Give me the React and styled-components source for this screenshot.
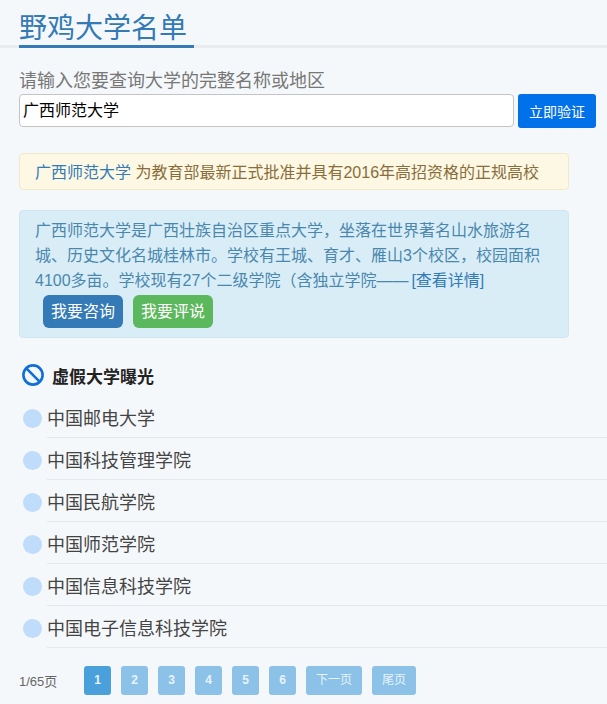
import React from 'react';
import styled, { createGlobalStyle } from 'styled-components';

const GlobalStyle = createGlobalStyle`
	html, body {
		margin: 0;
		padding: 0;
		background: #f5f8fa;
		font-family: 'Liberation Sans', 'Noto Sans CJK SC', sans-serif;
	}
	* {
		box-sizing: border-box;
	}
`;

const schools = [
	'中国邮电大学',
	'中国科技管理学院',
	'中国民航学院',
	'中国师范学院',
	'中国信息科技学院',
	'中国电子信息科技学院',
];

const pages = ['1', '2', '3', '4', '5', '6'];

const App = () => {
	return (
		<Page>
			<GlobalStyle />
			<TitleBar>
				<Title>野鸡大学名单</Title>
			</TitleBar>
			<Content>
				<SearchLabel>请输入您要查询大学的完整名称或地区</SearchLabel>
				<SearchRow>
					<SearchInput defaultValue="广西师范大学" />
					<SearchButton>立即验证</SearchButton>
				</SearchRow>
				<WarningBox>
					<SchoolLink>广西师范大学</SchoolLink> 为教育部最新正式批准并具有2016年高招资格的正规高校
				</WarningBox>
				<InfoBox>
					<InfoText>
						广西师范大学是广西壮族自治区重点大学，坐落在世界著名山水旅游名城、历史文化名城桂林市。学校有王城、育才、雁山3个校区，校园面积4100多亩。学校现有27个二级学院（含独立学院——<DetailLink>[查看详情]</DetailLink>
					</InfoText>
					<ActionRow>
						<ActionButton $bg="#337ab7">我要咨询</ActionButton>
						<ActionButton $bg="#5cb85c">我要评说</ActionButton>
					</ActionRow>
				</InfoBox>
				<SectionHeading>
					<svg width="24" height="24" viewBox="0 0 24 24" fill="none" stroke="#0f6fd6" strokeWidth="2.6">
						<circle cx="12" cy="12" r="9.6" />
						<line x1="5.4" y1="5.4" x2="18.6" y2="18.6" />
					</svg>
					<SectionTitle>虚假大学曝光</SectionTitle>
				</SectionHeading>
			</Content>
			<SchoolList>
				{schools.map((name) => (
					<SchoolRow key={name}>
						<Dot />
						<SchoolName>{name}</SchoolName>
					</SchoolRow>
				))}
			</SchoolList>
			<Pager>
				<PageCount>1/65页</PageCount>
				{pages.map((p) => (
					<PageButton key={p} $active={p === '1'}>
						{p}
					</PageButton>
				))}
				<PageButton $wide>下一页</PageButton>
				<PageButton $wide>尾页</PageButton>
			</Pager>
		</Page>
	);
};

export default App;

const Page = styled.div`
	width: 607px;
	height: 704px;
	overflow: hidden;
	background: #f5f8fa;
`;

const TitleBar = styled.div`
	height: 48px;
	padding-left: 19px;
	border-bottom: 3px solid #e9ecef;
`;

const Title = styled.h1`
	display: inline-block;
	margin: 0;
	height: 48px;
	width: 175px;
	padding-top: 4px;
	font-size: 28px;
	font-weight: 400;
	line-height: 50px;
	color: #337ab7;
	border-bottom: 3px solid #337ab7;
`;

const Content = styled.div`
	padding: 0 0 0 19px;
`;

const SearchLabel = styled.div`
	margin-top: 22px;
	height: 24px;
	font-size: 18px;
	line-height: 22px;
	color: #777;
`;

const SearchRow = styled.div`
	display: flex;
	gap: 4px;
	height: 34px;
`;

const SearchInput = styled.input`
	width: 495px;
	height: 33px;
	padding: 0 4px 3px 3px;
	font-family: inherit;
	font-size: 16px;
	color: #000;
	background: #fff;
	border: 1px solid #c4c4c4;
	border-radius: 4px;
	outline: none;
`;

const SearchButton = styled.button`
	width: 78px;
	height: 34px;
	padding: 0;
	font-family: inherit;
	font-size: 14px;
	color: #fff;
	background: #0071e8;
	border: none;
	border-radius: 3px;
`;

const WarningBox = styled.div`
	width: 550px;
	height: 37px;
	margin-top: 25px;
	padding: 0 15px;
	font-size: 16px;
	line-height: 37px;
	white-space: nowrap;
	color: #8a6d3b;
	background: #fcf8e3;
	border: 1px solid #f3e8c8;
	border-radius: 4px;
`;

const SchoolLink = styled.span`
	color: #337ab7;
`;

const InfoBox = styled.div`
	width: 550px;
	height: 128px;
	margin-top: 20px;
	padding: 7px 15px;
	background: #d9edf7;
	border: 1px solid #cfe6f2;
	border-radius: 4px;
`;

const InfoText = styled.div`
	font-size: 16px;
	line-height: 25px;
	color: #4a87ad;
`;

const DetailLink = styled.span`
	margin-left: 3px;
	color: #337ab7;
`;

const ActionRow = styled.div`
	display: flex;
	gap: 10px;
	margin-top: 2px;
	padding-left: 8px;
`;

const ActionButton = styled.div`
	width: 80px;
	height: 33px;
	font-size: 16px;
	line-height: 33px;
	text-align: center;
	color: #fff;
	background: ${(props) => props.$bg};
	border-radius: 6px;
`;

const SectionHeading = styled.div`
	display: flex;
	align-items: center;
	gap: 7px;
	height: 26px;
	margin-top: 24px;
	padding-left: 2px;
`;

const SectionTitle = styled.div`
	padding-top: 1px;
	font-size: 17px;
	font-weight: 700;
	color: #222;
`;

const SchoolList = styled.div`
	margin-top: 8px;
	padding-left: 23px;
`;

const SchoolRow = styled.div`
	display: flex;
	align-items: center;
	height: 42px;
`;

const Dot = styled.div`
	flex: none;
	width: 19px;
	height: 19px;
	margin-top: 2px;
	margin-right: 5px;
	border-radius: 50%;
	background: #bfdcfb;
`;

const SchoolName = styled.div`
	flex: 1;
	height: 42px;
	padding-top: 4px;
	font-size: 18px;
	line-height: 39px;
	color: #444;
	border-bottom: 1px solid #e4e8eb;
`;

const Pager = styled.div`
	display: flex;
	align-items: center;
	gap: 10px;
	margin-top: 18px;
	padding-left: 19px;
`;

const PageCount = styled.div`
	width: 55px;
	font-size: 13px;
	color: #666;
`;

const PageButton = styled.div`
	height: 29px;
	width: ${(props) => (props.$wide ? 'auto' : '27px')};
	padding: ${(props) => (props.$wide ? '0 10px' : '0')};
	font-size: 12px;
	font-weight: ${(props) => (props.$wide ? 400 : 700)};
	line-height: 29px;
	text-align: center;
	color: #e8f3fb;
	background: ${(props) => (props.$active ? '#49a0db' : '#8cc2e8')};
	border-radius: 3px;
`;
